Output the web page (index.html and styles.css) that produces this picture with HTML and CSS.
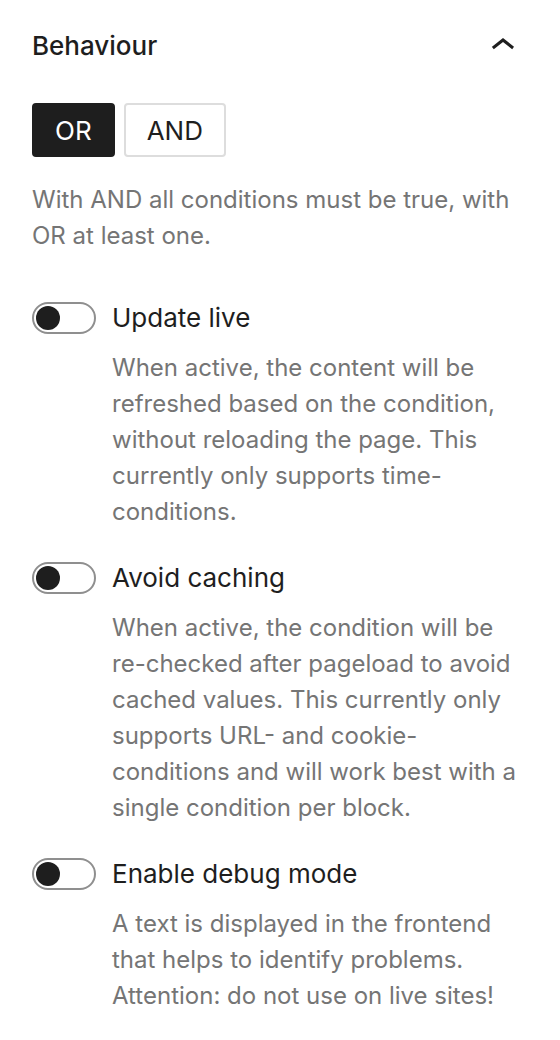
FILE: index.html
```html
<!DOCTYPE html>
<html lang="en">
<head>
<meta charset="utf-8">
<title>Behaviour</title>
<link rel="stylesheet" href="styles.css">
</head>
<body>
<div class="panel">
  <div class="panel-header">
    <h2 class="panel-title">Behaviour</h2>
    <svg class="chevron" viewBox="0 0 24 24" width="48" height="48" aria-hidden="true"><path d="M6.5 12.4L12 8l5.5 4.4-.9 1.2L12 10l-4.6 3.6-1-1.2z"/></svg>
  </div>
  <div class="panel-body">
    <div class="segmented">
      <button class="seg seg-active">OR</button>
      <button class="seg">AND</button>
    </div>
    <p class="help help-first">With AND all conditions must be true, with OR at least one.</p>

    <div class="control">
      <div class="toggle-row">
        <span class="toggle"><span class="thumb"></span></span>
        <span class="label">Update live</span>
      </div>
      <p class="help help-indent">When active, the content will be refreshed based on the condition, without reloading the page. This currently only supports time-conditions.</p>
    </div>

    <div class="control">
      <div class="toggle-row">
        <span class="toggle"><span class="thumb"></span></span>
        <span class="label">Avoid caching</span>
      </div>
      <p class="help help-indent">When active, the condition will be re-checked after pageload to avoid cached values. This currently only supports URL- and cookie-conditions and will work best with a single condition per block.</p>
    </div>

    <div class="control">
      <div class="toggle-row">
        <span class="toggle"><span class="thumb"></span></span>
        <span class="label">Enable debug mode</span>
      </div>
      <p class="help help-indent">A text is displayed in the frontend that helps to identify problems. Attention: do not use on live sites!</p>
    </div>
  </div>
</div>
</body>
</html>
```

FILE: styles.css
```css
html, body {
  margin: 0;
  padding: 0;
  background: #ffffff;
}

body {
  font-family: Inter, "Noto Sans", "Liberation Sans", sans-serif;
  color: #1e1e1e;
  -webkit-font-smoothing: antialiased;
}

.panel {
  width: 560px;
}

.panel-header {
  height: 92px;
  display: flex;
  align-items: center;
  justify-content: space-between;
  padding: 0 33px 0 32px;
}

.panel-title {
  margin: 0;
  font-size: 26px;
  font-weight: 500;
  line-height: 40px;
  color: #1e1e1e;
}

.chevron {
  display: block;
  fill: #1e1e1e;
}

.panel-body {
  padding: 11px 32px 32px;
}

.segmented {
  display: flex;
  gap: 9px;
}

.seg {
  height: 54px;
  padding: 0 21px;
  font-family: inherit;
  font-size: 26px;
  font-weight: 400;
  border-radius: 4px;
  border: 2px solid #dddddd;
  background: #ffffff;
  color: #1e1e1e;
  cursor: pointer;
}

.seg-active {
  background: #1e1e1e;
  border-color: #1e1e1e;
  color: #ffffff;
}

.help {
  margin: 0;
  font-size: 24px;
  line-height: 36px;
  color: #757575;
}

.help-first {
  margin-top: 25px;
  margin-bottom: 48px;
}

.control + .control {
  margin-top: 32px;
}

.toggle-row {
  display: flex;
  align-items: center;
  gap: 16px;
  height: 32px;
}

.toggle {
  box-sizing: border-box;
  width: 64px;
  height: 32px;
  border: 2px solid #8f8f8f;
  border-radius: 16px;
  display: flex;
  align-items: center;
  padding-left: 2px;
  flex-shrink: 0;
}

.thumb {
  width: 24px;
  height: 24px;
  border-radius: 50%;
  background: #1e1e1e;
}

.label {
  font-size: 26px;
  line-height: 40px;
  color: #1e1e1e;
}

.help-indent {
  margin-top: 16px;
  padding-left: 80px;
}
```
